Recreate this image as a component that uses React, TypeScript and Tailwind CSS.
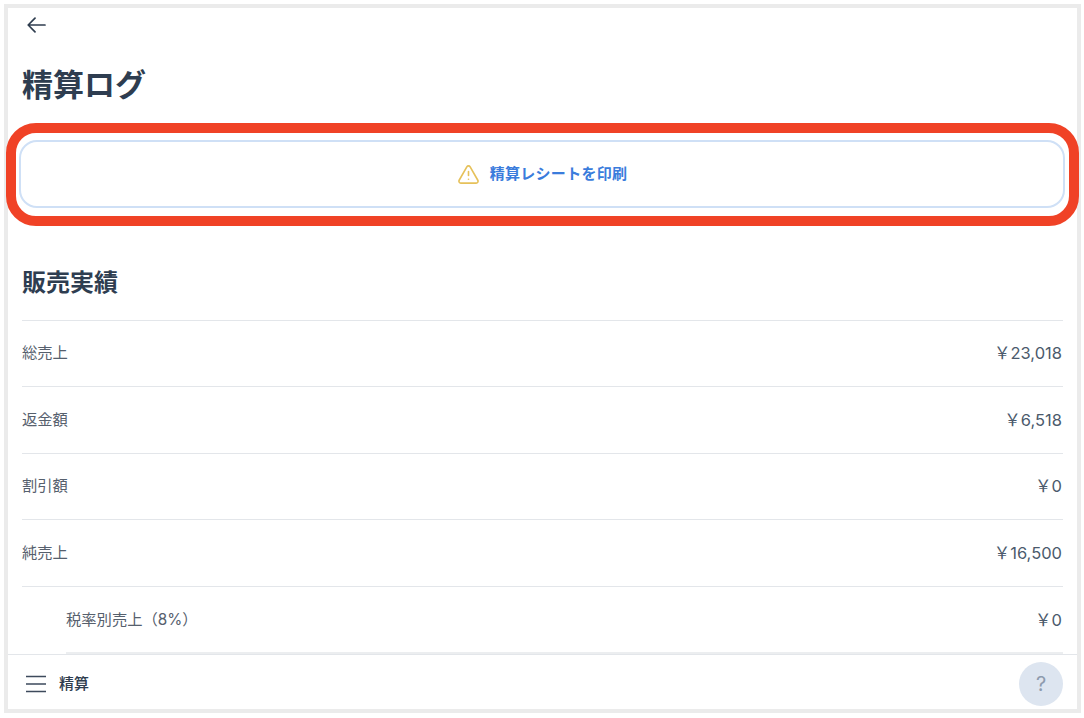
import { AlertTriangle } from "lucide-react";

const rows = [
  { label: "総売上", value: "23,018" },
  { label: "返金額", value: "6,518" },
  { label: "割引額", value: "0" },
  { label: "純売上", value: "16,500" },
];

function Yen({ value }: { value: string }) {
  return (
    <span className="pr-px text-[16.5px] text-[#4b5a6c]">
      <span className="font-['Noto_Sans_CJK_JP',sans-serif]">{"\uFFE5"}</span>
      {value}
    </span>
  );
}

function Row({ label, value }: { label: string; value: string }) {
  return (
    <div className="flex h-[66.5px] items-center justify-between border-t border-[#e3e6ea] text-[15.3px] text-[#56606d]">
      <span className="pt-px">{label}</span>
      <Yen value={value} />
    </div>
  );
}

export default function App() {
  return (
    <div className="h-[718px] w-[1084px] overflow-hidden bg-white pt-1 pl-1 font-['Inter','Noto_Sans_CJK_JP',sans-serif]">
      <div className="flex h-[709px] w-[1077px] flex-col border-4 border-[#ebebeb] bg-white">
        <main className="min-h-0 flex-1 overflow-x-visible overflow-y-clip px-[14px] pt-[9px]">
          <button className="ml-[5px] block h-4 text-[#2f3d4f]">
            <svg width="19" height="16" viewBox="0 0 19 16" fill="none" stroke="currentColor" strokeWidth="1.7" strokeLinecap="round" strokeLinejoin="round">
              <path d="M18 8H1.5M8 1.2 1.2 8 8 14.8" />
            </svg>
          </button>
          <h1 className="mt-[32px] text-[31px] leading-[40px] font-bold text-[#2e3d50]">精算ログ</h1>

          <div className="relative mt-[35px] -mr-[2px] -ml-[3px]">
            <button className="flex h-[68px] w-full items-center justify-center gap-[10px] rounded-[18px] border-2 border-[#cfe0f6] bg-white pt-px text-[15px] font-bold tracking-[0.3px] text-[#3a7cdc]">
              <AlertTriangle className="h-[23px] w-[23px] text-[#e6c15a]" strokeWidth={1.7} />
              精算レシートを印刷
            </button>
            <div className="pointer-events-none absolute -top-[17px] -right-[14px] -bottom-[18px] -left-[13px] rounded-[30px] border-[10.5px] border-[#f04226]" />
          </div>

          <h2 className="mt-[59px] text-[24px] leading-[32px] font-bold text-[#2e3d50]">販売実績</h2>

          <div className="mt-[20.6px]">
            {rows.map((r) => (
              <Row key={r.label} label={r.label} value={r.value} />
            ))}
            <div className="border-t border-[#e3e6ea] pl-[44px]">
              <div className="flex h-[67px] items-center justify-between border-b-2 border-[#eceef0] pt-[2px] text-[15.3px] text-[#56606d]">
                <span>税率別売上（8%）</span>
                <Yen value="0" />
              </div>
            </div>
          </div>
        </main>

        <footer className="flex h-[55px] shrink-0 items-center justify-between border-t border-[#e3e6ea] bg-white pt-[3px] pr-[14px] pl-[18px]">
          <div className="flex items-center gap-[13px]">
            <svg width="20" height="18" viewBox="0 0 20 18" fill="none" stroke="#3d4a5c" strokeWidth="1.7">
              <path d="M0 1.5h20M0 9h20M0 16.5h20" />
            </svg>
            <span className="pt-px text-[15px] font-medium text-[#2f3d4f]">精算</span>
          </div>
          <div className="flex h-[44px] w-[44px] items-center justify-center rounded-full bg-[#dde5f0] text-[20px] text-[#8e9bae]">?</div>
        </footer>
      </div>
    </div>
  );
}
